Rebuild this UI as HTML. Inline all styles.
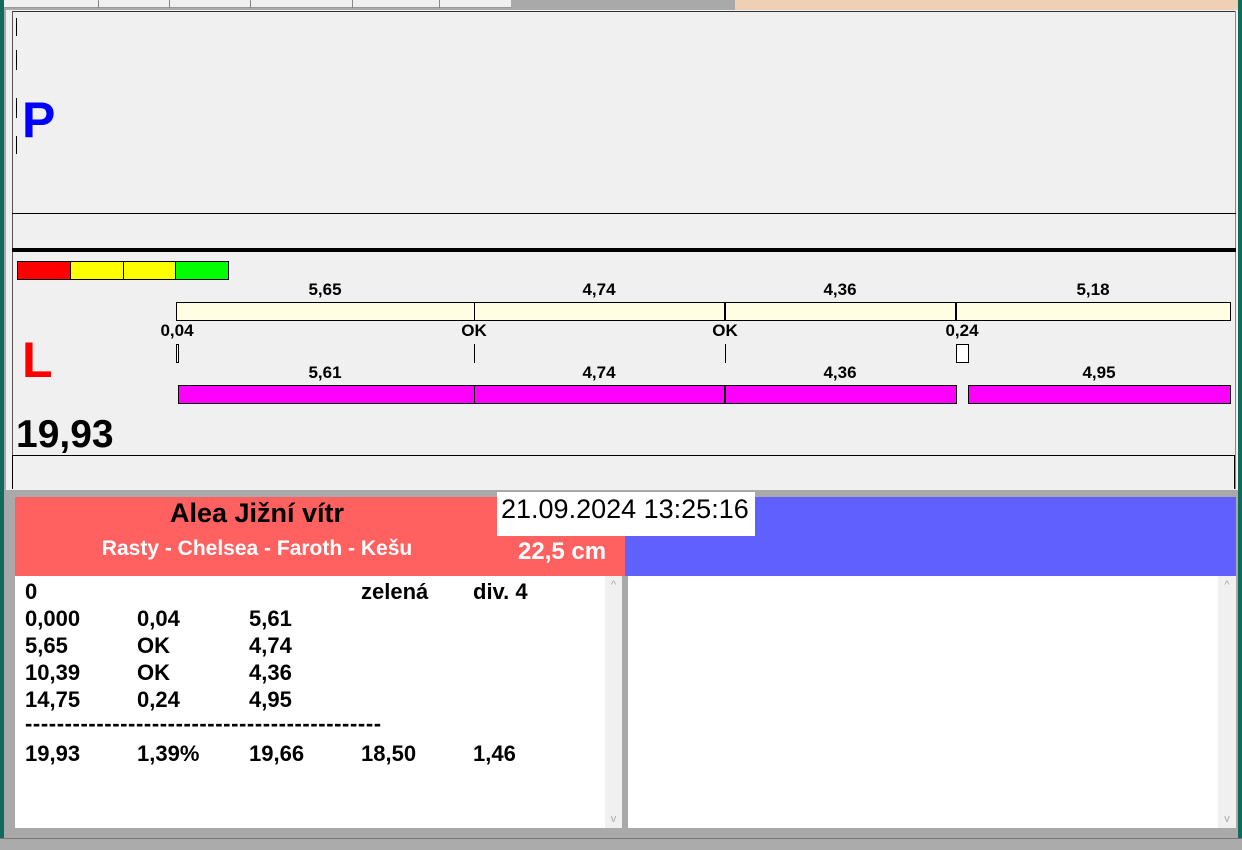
<!DOCTYPE html>
<html><head><meta charset="utf-8"><style>
*{margin:0;padding:0;box-sizing:border-box}
body{width:1242px;height:850px;position:relative;overflow:hidden;background:#a9a9a9;font-family:"Liberation Sans",Arial,sans-serif}
.a{position:absolute}
.t{position:absolute;font-weight:bold;font-size:17px;transform:translateX(-50%);white-space:nowrap}
.r{position:absolute;font-weight:bold;font-size:22px;white-space:nowrap}
.sb{color:#aaa;font-size:11px;text-align:center}
</style></head><body>
<div class="a" style="left:0;top:0;width:4px;height:850px;background:#0f6b5a"></div>
<div class="a" style="left:1238px;top:0;width:4px;height:850px;background:#0f6b5a"></div>
<div class="a" style="left:4px;top:0;width:507px;height:8px;background:#f0f0f0;border-bottom:1px solid #999"></div>
<div class="a" style="left:98px;top:0;width:1px;height:8px;background:#888"></div>
<div class="a" style="left:169px;top:0;width:1px;height:8px;background:#888"></div>
<div class="a" style="left:250px;top:0;width:1px;height:8px;background:#888"></div>
<div class="a" style="left:352px;top:0;width:1px;height:8px;background:#888"></div>
<div class="a" style="left:439px;top:0;width:1px;height:8px;background:#888"></div>
<div class="a" style="left:735px;top:0;width:503px;height:12px;background:#f0d0b4"></div>
<div class="a" style="left:6px;top:10px;width:1232px;height:480px;background:#f0f0f0"></div>
<div class="a" style="left:12px;top:11px;width:1224px;height:1px;background:#333"></div>
<div class="a" style="left:12px;top:11px;width:1px;height:478px;background:#555"></div>
<div class="a" style="left:1235px;top:11px;width:1px;height:478px;background:#888"></div>
<div class="a" style="left:16px;top:18px;width:1px;height:18px;background:#000"></div>
<div class="a" style="left:16px;top:50px;width:1px;height:20px;background:#000"></div>
<div class="a" style="left:16px;top:98px;width:1px;height:20px;background:#000"></div>
<div class="a" style="left:16px;top:136px;width:1px;height:18px;background:#000"></div>
<div class="a" style="left:22px;top:92px;font-size:50px;font-weight:bold;color:#0000ff;line-height:56px">P</div>
<div class="a" style="left:12px;top:213px;width:1224px;height:1px;background:#000"></div>
<div class="a" style="left:12px;top:248px;width:1224px;height:4px;background:#000"></div>
<div class="a" style="left:17px;top:261px;width:212px;height:19px;border:1px solid #000;display:flex">
<div style="flex:1;background:#f00;border-right:1px solid #000"></div><div style="flex:1;background:#ff0;border-right:1px solid #000"></div><div style="flex:1;background:#ff0;border-right:1px solid #000"></div><div style="flex:1;background:#0f0"></div></div>
<div class="a" style="left:176px;top:302px;width:1055px;height:19px;background:#fffee2;border:1px solid #000"></div>
<div class="a" style="left:474px;top:302px;width:1px;height:19px;background:#000"></div>
<div class="a" style="left:724px;top:302px;width:2px;height:19px;background:#000"></div>
<div class="a" style="left:955px;top:302px;width:2px;height:19px;background:#000"></div>
<div class="t" style="left:325px;top:280px">5,65</div>
<div class="t" style="left:599px;top:280px">4,74</div>
<div class="t" style="left:840px;top:280px">4,36</div>
<div class="t" style="left:1093px;top:280px">5,18</div>
<div class="t" style="left:177px;top:321px">0,04</div>
<div class="t" style="left:474px;top:321px">OK</div>
<div class="t" style="left:725px;top:321px">OK</div>
<div class="t" style="left:962px;top:321px">0,24</div>
<div class="a" style="left:176px;top:344px;width:3px;height:19px;border:1px solid #000;background:#fff"></div>
<div class="a" style="left:474px;top:344px;width:1px;height:19px;background:#000"></div>
<div class="a" style="left:725px;top:344px;width:1px;height:19px;background:#000"></div>
<div class="a" style="left:956px;top:344px;width:13px;height:19px;border:1px solid #000;background:#fff"></div>
<div class="a" style="left:22px;top:332px;font-size:50px;font-weight:bold;color:#f00;line-height:56px">L</div>
<div class="t" style="left:325px;top:363px">5,61</div>
<div class="t" style="left:599px;top:363px">4,74</div>
<div class="t" style="left:840px;top:363px">4,36</div>
<div class="t" style="left:1099px;top:363px">4,95</div>
<div class="a" style="left:178px;top:385px;width:779px;height:19px;background:#f0f;border:1px solid #000"></div>
<div class="a" style="left:474px;top:385px;width:1px;height:19px;background:#000"></div>
<div class="a" style="left:724px;top:385px;width:2px;height:19px;background:#000"></div>
<div class="a" style="left:968px;top:385px;width:263px;height:19px;background:#f0f;border:1px solid #000"></div>
<div class="a" style="left:16px;top:413px;font-size:39px;font-weight:bold;line-height:44px">19,93</div>
<div class="a" style="left:12px;top:455px;width:1223px;height:34px;border:1px solid #000;border-bottom:none"></div>
<div class="a" style="left:15px;top:497px;width:610px;height:79px;background:#ff6060"></div>
<div class="a" style="left:625px;top:497px;width:611px;height:79px;background:#6060ff"></div>
<div class="a" style="left:497px;top:492px;width:258px;height:44px;background:#fff"></div>
<div class="a" style="left:501px;top:494px;font-size:27px">21.09.2024 13:25:16</div>
<div class="t" style="left:257px;top:498px;font-size:27px">Alea Jižní vítr</div>
<div class="t" style="left:257px;top:537px;font-size:21px;color:#fff">Rasty - Chelsea - Faroth - Kešu</div>
<div class="a" style="left:518px;top:538px;font-size:24px;font-weight:bold;color:#fff">22,5 cm</div>
<div class="a" style="left:15px;top:576px;width:590px;height:252px;background:#fff"></div>
<div class="a sb" style="left:605px;top:576px;width:17px;height:252px;background:#f0f0f0"><div style="position:absolute;top:3px;width:17px">^</div><div style="position:absolute;bottom:3px;width:17px">v</div></div>
<div class="a" style="left:628px;top:576px;width:590px;height:252px;background:#fff"></div>
<div class="a sb" style="left:1218px;top:576px;width:18px;height:252px;background:#f0f0f0"><div style="position:absolute;top:3px;width:18px">^</div><div style="position:absolute;bottom:3px;width:18px">v</div></div>
<div class="a" style="left:0;top:838px;width:1242px;height:12px;background:#ababab;border-top:1px solid #777"></div>
<div class="r" style="left:25px;top:579px">0</div><div class="r" style="left:361px;top:579px">zelená</div><div class="r" style="left:473px;top:579px">div. 4</div>
<div class="r" style="left:25px;top:606px">0,000</div><div class="r" style="left:137px;top:606px">0,04</div><div class="r" style="left:249px;top:606px">5,61</div>
<div class="r" style="left:25px;top:633px">5,65</div><div class="r" style="left:137px;top:633px">OK</div><div class="r" style="left:249px;top:633px">4,74</div>
<div class="r" style="left:25px;top:660px">10,39</div><div class="r" style="left:137px;top:660px">OK</div><div class="r" style="left:249px;top:660px">4,36</div>
<div class="r" style="left:25px;top:687px">14,75</div><div class="r" style="left:137px;top:687px">0,24</div><div class="r" style="left:249px;top:687px">4,95</div>
<div class="r" style="left:25px;top:711px;letter-spacing:0.6px">---------------------------------------------</div>
<div class="r" style="left:25px;top:741px">19,93</div><div class="r" style="left:137px;top:741px">1,39%</div><div class="r" style="left:249px;top:741px">19,66</div><div class="r" style="left:361px;top:741px">18,50</div><div class="r" style="left:473px;top:741px">1,46</div>
</body></html>
